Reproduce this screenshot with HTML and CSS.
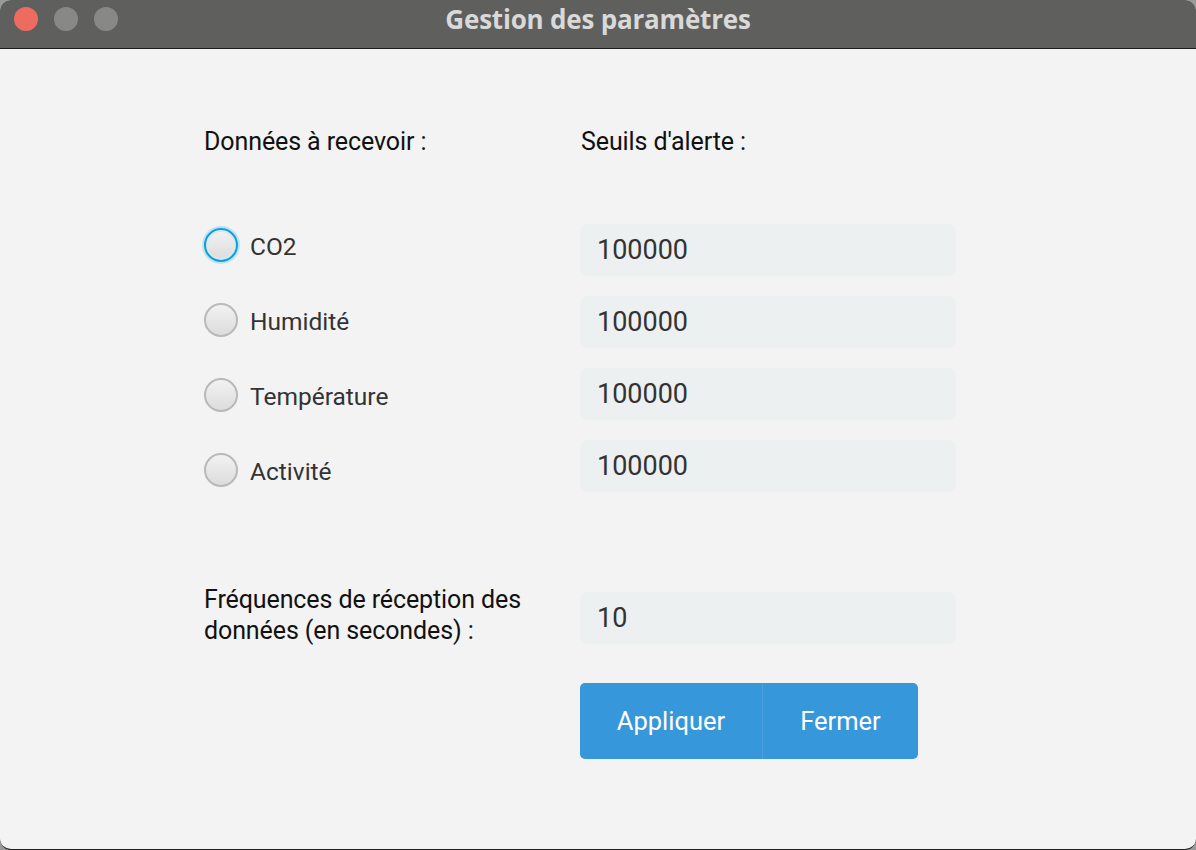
FILE: index.html
```html
<!DOCTYPE html>
<html lang="fr">
<head>
<meta charset="utf-8">
<title>Gestion des paramètres</title>
<link rel="stylesheet" href="styles.css">
</head>
<body>
<div class="window">
  <div class="titlebar">
    <div class="lights">
      <span class="light red"></span>
      <span class="light grey"></span>
      <span class="light grey"></span>
    </div>
    <div class="title">Gestion des paramètres</div>
  </div>
  <div class="content">
    <div class="form">
      <div class="head">Données à recevoir :</div>
      <div class="head">Seuils d'alerte :</div>

      <div class="radios">
        <label class="radio"><span class="dot focused"></span><span class="rlabel">CO2</span></label>
        <label class="radio"><span class="dot"></span><span class="rlabel">Humidité</span></label>
        <label class="radio"><span class="dot"></span><span class="rlabel">Température</span></label>
        <label class="radio"><span class="dot"></span><span class="rlabel">Activité</span></label>
      </div>
      <div class="fields">
        <div class="field">100000</div>
        <div class="field">100000</div>
        <div class="field">100000</div>
        <div class="field">100000</div>
      </div>

      <div class="freq-label">Fréquences de réception des<br>données (en secondes) :</div>
      <div class="freq-field"><div class="field">10</div></div>

      <div class="spacer"></div>
      <div class="buttons">
        <button class="btn apply">Appliquer</button>
        <button class="btn close">Fermer</button>
      </div>
    </div>
  </div>
</div>
</body>
</html>
```

FILE: styles.css
```css
html, body {
  margin: 0;
  padding: 0;
}
body {
  width: 1196px;
  height: 850px;
  background: #9a9a9a;
  font-family: Roboto, "Liberation Sans", sans-serif;
  overflow: hidden;
}
.window {
  width: 1196px;
  height: 849px;
  border-bottom: 1px solid #222;
  border-radius: 11px;
  overflow: hidden;
  background: #f3f3f3;
  display: flex;
  flex-direction: column;
}
.titlebar {
  height: 48px;
  flex: none;
  background: #5f5f5d;
  border-bottom: 1px solid #1c1c1c;
  position: relative;
  display: flex;
  align-items: center;
  justify-content: center;
}
.lights {
  position: absolute;
  left: 14px;
  top: 7px;
  display: flex;
  gap: 16px;
}
.light {
  width: 24px;
  height: 24px;
  border-radius: 50%;
  background: #888886;
}
.light.red {
  background: #ee6b5f;
}
.title {
  color: #d9d9d9;
  font-family: "Open Sans", "Liberation Sans", sans-serif;
  font-weight: 700;
  font-size: 26px;
  letter-spacing: -0.2px;
  margin-top: -10px;
}
.content {
  flex: 1;
  padding: 80px 0 0 204px;
}
.form {
  display: grid;
  grid-template-columns: 376px 376px;
}
.head {
  font-size: 25px;
  line-height: 24px;
  color: #111;
  letter-spacing: -0.1px;
  height: 24px;
  margin-top: 1px;
  margin-bottom: 70px;
}
.head + .head {
  padding-left: 1px;
}
.radios {
  display: flex;
  flex-direction: column;
  gap: 41px;
  padding-top: 4px;
}
.radio {
  display: flex;
  align-items: center;
  gap: 12px;
  height: 34px;
}
.dot {
  width: 30px;
  height: 30px;
  border-radius: 50%;
  border: 2px solid #b9b9b9;
  background: linear-gradient(#f2f2f2, #dcdcdc);
  box-sizing: content-box;
}
.dot.focused {
  border-color: #0d9edb;
  box-shadow: 0 0 0 2px #bfe3f3, inset 0 0 0 2px #d6e9f2;
}
.rlabel {
  font-size: 24.5px;
  color: #333;
  margin-top: 2px;
}
.fields {
  display: flex;
  flex-direction: column;
  gap: 20px;
}
.field {
  height: 52px;
  width: 376px;
  box-sizing: border-box;
  background: #edf0f1;
  border-radius: 6px;
  padding-left: 17px;
  display: flex;
  align-items: center;
  font-size: 27px;
  color: #333;
}
.freq-label {
  margin-top: 92px;
  font-size: 25px;
  line-height: 31px;
  color: #111;
  letter-spacing: -0.1px;
}
.freq-field {
  margin-top: 100px;
}
.spacer {
  height: 1px;
}
.buttons {
  display: flex;
  margin-top: 37px;
}
.btn {
  height: 76px;
  border: none;
  background: #3797db;
  color: #fff;
  font-family: Roboto, "Liberation Sans", sans-serif;
  font-size: 25.5px;
  padding: 0;
}
.btn.apply {
  width: 183px;
  border-radius: 5px 0 0 5px;
  border-right: 1px solid #4a9fdc;
}
.btn.close {
  width: 155px;
  border-radius: 0 5px 5px 0;
}
```
